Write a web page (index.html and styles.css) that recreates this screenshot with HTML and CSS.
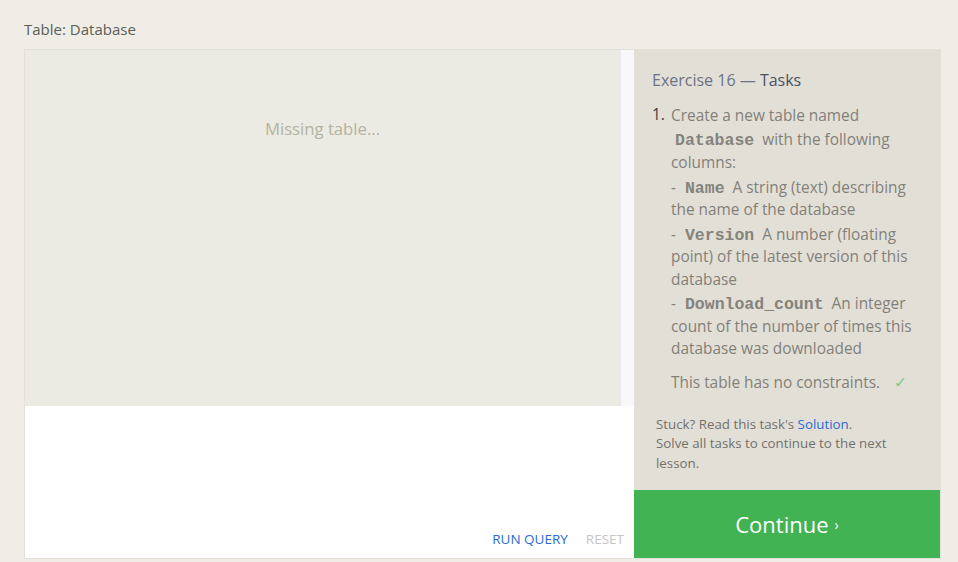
FILE: index.html
```html
<!DOCTYPE html>
<html>
<head>
<meta charset="utf-8">
<link rel="stylesheet" href="styles.css">
</head>
<body>
<div class="page">
  <div class="title">Table: Database</div>
  <div class="frame">
    <div class="left">
      <div class="tablearea">
        <div class="tableview"><div class="missing">Missing table...</div></div>
        <div class="scrollbar"></div>
      </div>
      <div class="editor">
        <div class="actions">
          <span class="run">RUN QUERY</span>
          <span class="reset">RESET</span>
        </div>
      </div>
    </div>
    <div class="right">
      <div class="tasks">
        <div class="heading">Exercise 16 — <span class="strong">Tasks</span></div>
        <div class="task">
          <span class="num">1.</span>
          <div class="body">
            <div class="p first">Create a new table named <code>Database</code> with the following columns:</div>
            <div class="p"><span class="dash">-</span><code>Name</code> A string (text) describing the name of the database</div>
            <div class="p"><span class="dash">-</span><code>Version</code> A number (floating point) of the latest version of this database</div>
            <div class="p"><span class="dash">-</span><code>Download_count</code> An integer count of the number of times this database was downloaded</div>
            <div class="p note">This table has no constraints. <span class="check">✓</span></div>
          </div>
        </div>
      </div>
      <div class="help">
        <div>Stuck? Read this task's <span class="link">Solution</span>.</div>
        <div>Solve all tasks to continue to the next lesson.</div>
      </div>
      <div class="continue">Continue <span class="chev">›</span></div>
    </div>
  </div>
</div>
</body>
</html>
```

FILE: styles.css
```css
* { box-sizing: border-box; }
html, body { margin: 0; padding: 0; }
body {
  background: #f0ede6;
  font-family: "Open Sans", "DejaVu Sans", sans-serif;
  width: 958px;
  height: 562px;
  overflow: hidden;
}
.page { padding: 19px 18px 0 24px; }
.title {
  font-size: 15px;
  color: #5e5e58;
  height: 30px;
  line-height: 21px;
}
.frame {
  display: flex;
  width: 917px;
  height: 510px;
  border: 1px solid #e3e1da;
}
.left {
  width: 609px;
  display: flex;
  flex-direction: column;
}
.tablearea {
  height: 356px;
  display: flex;
  background: #ebeae3;
}
.tableview { flex: 1; display: flex; justify-content: center; }
.missing {
  margin-top: 67px;
  font-size: 16.7px;
  color: #b3b4a0;
  height: 24px;
}
.scrollbar { width: 14px; background: #f8f8fa; border-left: 1px solid #e8e8ea; }
.editor {
  flex: 1;
  background: #fff;
  display: flex;
  align-items: flex-end;
  justify-content: flex-end;
}
.actions { display: flex; gap: 18px; padding: 0 10px 10px 0; font-size: 13.5px; }
.run { color: #2b6cd4; }
.reset { color: #c6c6c6; }
.right {
  flex: 1;
  display: flex;
  flex-direction: column;
  background: #e2dfd7;
}
.tasks { padding: 19px 18px 0 18px; flex: 1; }
.heading {
  font-size: 16px;
  color: #6c7386;
  line-height: 22px;
  margin-bottom: 13px;
}
.heading .strong { color: #4a5263; }
.task { display: flex; font-size: 15.4px; color: #828179; line-height: 22.5px; }
.num { color: #3f3f3f; width: 19px; flex: none; }
.body .p { margin-bottom: 2px; }
.body .first { line-height: 23.5px; }
.dash { margin-right: 9px; }
code {
  font-family: "Liberation Mono", "Courier New", monospace;
  font-weight: bold;
  font-size: 16.5px;
  line-height: 1;
  color: #84837c;
  margin: 0 4px 0 0;
}
.first code { margin: 0 4px; }
.note { margin-top: 11px; }
.check { color: #7fc98a; margin-left: 10px; }
.help {
  padding: 0 18px 17px 22px;
  font-size: 13.3px;
  line-height: 19.5px;
  color: #72716a;
}
.link { color: #2b6cd4; }
.continue {
  height: 68px;
  background: #41b352;
  color: #fff;
  font-size: 22px;
  display: flex;
  align-items: center;
  justify-content: center;
}
.chev { font-size: 14px; margin-left: 6px; }
```
